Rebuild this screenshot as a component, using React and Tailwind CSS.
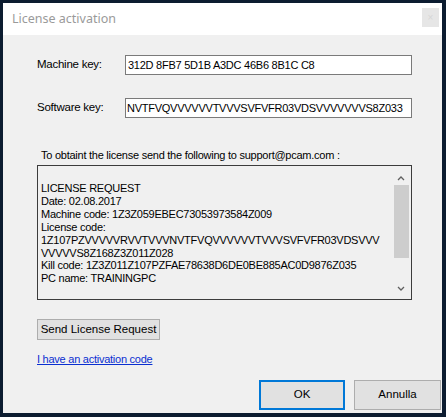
export default function App() {
  const lines = [
    'LICENSE REQUEST',
    'Date: 02.08.2017',
    'Machine code: 1Z3Z059EBEC73053973584Z009',
    'License code:',
    '1Z107PZVVVVVRVVTVVVNVTFVQVVVVVVTVVVSVFVFR03VDSVVV',
    'VVVVVS8Z168Z3Z011Z028',
    'Kill code: 1Z3Z011Z107PZFAE78638D6DE0BE885AC0D9876Z035',
    'PC name: TRAININGPC',
  ];

  return (
    <div className="w-[446px] h-[417px] bg-[#0c1c30] pt-[3px] pl-[3px] overflow-hidden"
      style={{ fontFamily: '"Liberation Sans", Arial, sans-serif' }}>
      <div className="w-[439px] h-[410px] bg-[#f0f0f0] flex flex-col overflow-hidden">
        {/* Title bar */}
        <div className="h-[32px] bg-white flex items-center justify-between pl-[9px] pr-[3px] shrink-0">
          <span className="text-[12.5px] text-[#9a9a9a]" style={{ fontFamily: '"Noto Sans", "Open Sans", sans-serif' }}>
            License activation
          </span>
          <div className="w-[17px] h-[19px] mt-[-4px] bg-[#e6e6e6] flex items-center justify-center text-[#d6d6d6] text-[10px]">
            ×
          </div>
        </div>

        {/* Client area */}
        <div className="flex-1 flex flex-col pl-[34px] text-[11px] tracking-[-0.25px] text-black">
          <div className="flex items-center mt-[20px]">
            <span className="w-[88px] text-[11.5px]">Machine key:</span>
            <div className="w-[287px] h-[20px] bg-white border border-[#7a7a7a] flex items-center pl-[2px]">
              312D 8FB7 5D1B A3DC 46B6 8B1C C8
            </div>
          </div>
          <div className="flex items-center mt-[23px]">
            <span className="w-[88px] text-[11.5px]">Software key:</span>
            <div className="w-[287px] h-[20px] bg-white border border-[#7a7a7a] flex items-center pl-[1px] overflow-hidden whitespace-nowrap">
              NVTFVQVVVVVVTVVVSVFVFR03VDSVVVVVVVS8Z033
            </div>
          </div>

          <div className="mt-[31px] pl-[4px] leading-[13px]">
            To obtaint the license send the following to support@pcam.com :
          </div>

          <div className="mt-[3px] w-[375px] h-[135px] border border-[#3c3c3c] bg-[#f0f0f0] flex">
            <div className="flex-1 pl-[3px] pt-[16px] leading-[12.9px] whitespace-pre overflow-hidden">
              {lines.map((l, i) => <div key={i}>{l}</div>)}
            </div>
            <div className="w-[16px] mr-[2px] flex flex-col items-center">
              <svg width="10" height="8" className="mt-[8px]" viewBox="0 0 10 8">
                <polyline points="2,6 5,3 8,6" fill="none" stroke="#606060" strokeWidth="1.3" />
              </svg>
              <div className="w-[15px] h-[73px] mt-[3px] bg-[#cdcdcd]" />
              <div className="flex-1" />
              <svg width="10" height="8" className="mb-[6px]" viewBox="0 0 10 8">
                <polyline points="2,2 5,5 8,2" fill="none" stroke="#606060" strokeWidth="1.3" />
              </svg>
            </div>
          </div>

          <button className="mt-[19px] w-[123px] h-[21px] bg-[#e1e1e1] border border-[#adadad] text-[11.5px] tracking-normal text-black">
            Send License Request
          </button>

          <a className="mt-[13px] w-fit text-[11px] text-[#0a2fd1] underline underline-offset-1 leading-[13px]">
            I have an activation code
          </a>

          <div className="flex justify-end gap-[9px] mt-[14px] pr-[1px]">
            <button className="w-[86px] h-[30px] bg-[#e1e1e1] border-2 border-[#0078d7] text-[11.5px] tracking-normal text-black">
              OK
            </button>
            <button className="w-[87px] h-[30px] bg-[#e1e1e1] border border-[#adadad] text-[11.5px] tracking-normal text-black">
              Annulla
            </button>
          </div>
        </div>
      </div>
    </div>
  );
}
